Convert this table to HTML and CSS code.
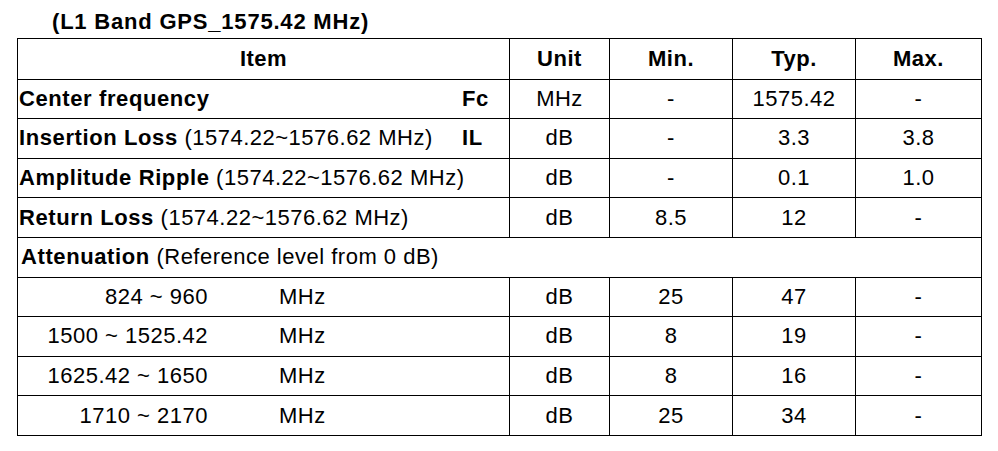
FILE: index.html
```html
<!DOCTYPE html>
<html>
<head>
<meta charset="utf-8">
<link rel="stylesheet" href="styles.css">
</head>
<body>
<div class="page">
  <h1 class="title">(L1 Band GPS_1575.42 MHz)</h1>
  <table class="spec">
    <colgroup>
      <col class="c-item"><col class="c-unit"><col class="c-min"><col class="c-typ"><col class="c-max">
    </colgroup>
    <thead>
      <tr><th>Item</th><th>Unit</th><th>Min.</th><th>Typ.</th><th>Max.</th></tr>
    </thead>
    <tbody>
      <tr>
        <td class="item"><div class="itemrow"><span class="label"><b>Center frequency</b></span><b class="sym">Fc</b></div></td>
        <td>MHz</td><td>-</td><td>1575.42</td><td>-</td>
      </tr>
      <tr>
        <td class="item"><div class="itemrow"><span class="label"><b>Insertion Loss</b> (1574.22~1576.62 MHz)</span><b class="sym">IL</b></div></td>
        <td>dB</td><td>-</td><td>3.3</td><td>3.8</td>
      </tr>
      <tr>
        <td class="item"><div class="itemrow"><span class="label"><b>Amplitude Ripple</b> (1574.22~1576.62 MHz)</span></div></td>
        <td>dB</td><td>-</td><td>0.1</td><td>1.0</td>
      </tr>
      <tr>
        <td class="item"><div class="itemrow"><span class="label"><b>Return Loss</b> (1574.22~1576.62 MHz)</span></div></td>
        <td>dB</td><td>8.5</td><td>12</td><td>-</td>
      </tr>
      <tr>
        <td class="item span" colspan="5"><b>Attenuation</b> (Reference level from 0 dB)</td>
      </tr>
      <tr>
        <td class="item"><div class="bandrow"><span class="range">824 ~ 960</span><span class="bunit">MHz</span></div></td>
        <td>dB</td><td>25</td><td>47</td><td>-</td>
      </tr>
      <tr>
        <td class="item"><div class="bandrow"><span class="range">1500 ~ 1525.42</span><span class="bunit">MHz</span></div></td>
        <td>dB</td><td>8</td><td>19</td><td>-</td>
      </tr>
      <tr>
        <td class="item"><div class="bandrow"><span class="range">1625.42 ~ 1650</span><span class="bunit">MHz</span></div></td>
        <td>dB</td><td>8</td><td>16</td><td>-</td>
      </tr>
      <tr>
        <td class="item"><div class="bandrow"><span class="range">1710 ~ 2170</span><span class="bunit">MHz</span></div></td>
        <td>dB</td><td>25</td><td>34</td><td>-</td>
      </tr>
    </tbody>
  </table>
</div>
</body>
</html>
```

FILE: styles.css
```css
html, body {
  margin: 0;
  padding: 0;
  background: #fff;
}
body {
  font-family: "Liberation Sans", Arial, sans-serif;
  font-size: 22px;
  color: #000;
  letter-spacing: 0.5px;
}
.page {
  padding: 10px 0 0 17px;
}
.title {
  margin: 0 0 0 35px;
  font-size: 22px;
  line-height: 24px;
  height: 28px;
  font-weight: bold;
  letter-spacing: 0.8px;
}
.spec {
  border-collapse: collapse;
  table-layout: fixed;
  width: 964px;
}
.c-item { width: 492px; }
.c-unit { width: 100px; }
.c-min { width: 123px; }
.c-typ { width: 123px; }
.c-max { width: 126px; }
.spec th, .spec td {
  border: 1px solid #000;
  height: 38.6px;
  padding: 0;
  text-align: center;
  vertical-align: middle;
  line-height: 24px;
  white-space: nowrap;
}
.spec th {
  font-weight: bold;
  padding-top: 1px;
}
.spec td.item {
  text-align: left;
  padding-left: 1px;
}
.spec td.span {
  padding-left: 3px;
}
b { letter-spacing: 0.6px; }
.itemrow {
  display: flex;
  align-items: center;
}
.label { flex: 1; }
.sym {
  width: 47px;
  flex: none;
}
.bandrow {
  display: flex;
  align-items: center;
}
.range {
  width: 189px;
  text-align: right;
  flex: none;
}
.bunit {
  margin-left: 71px;
}
```
